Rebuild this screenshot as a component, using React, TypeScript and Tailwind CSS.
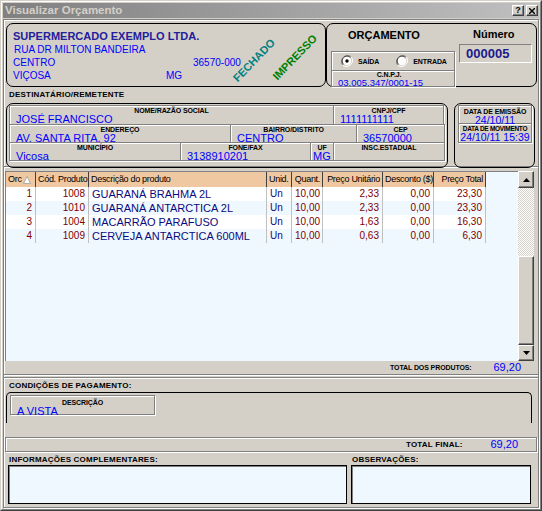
import type { ReactNode } from "react";

const etched = "border border-[#808080] shadow-[inset_1px_1px_0_#fff,1px_1px_0_#fff]";
const raised =
  "border border-t-white border-l-white border-r-[#404040] border-b-[#404040] shadow-[inset_-1px_-1px_0_#808080]";
const sunken = "border border-t-[#808080] border-l-[#808080] border-r-white border-b-white";
const tiny = "text-[7px] font-bold leading-[7px] text-black tracking-[-0.1px]";
const section = "text-[8px] font-bold leading-[8px] text-black tracking-[0.2px]";

function Field({
  label,
  value,
  className = "",
  valueClass = "text-[11px] px-[6px]",
}: {
  label: string;
  value?: ReactNode;
  className?: string;
  valueClass?: string;
}) {
  return (
    <div className={`${etched} -ml-[1px] first:ml-0 overflow-hidden ${className}`}>
      <div className={`${tiny} text-center pt-[1px] leading-[6px] whitespace-nowrap`}>{label}</div>
      <div className={`leading-[10px] text-[#0000ff] whitespace-nowrap ${valueClass}`}>{value}</div>
    </div>
  );
}

function Radio({ checked }: { checked?: boolean }) {
  return (
    <svg width="12" height="12" viewBox="0 0 12 12">
      <path d="M10.2 1.8A6 6 0 0 0 1.8 10.2" fill="none" stroke="#808080" />
      <path d="M9.4 2.6A4.8 4.8 0 0 0 2.6 9.4" fill="none" stroke="#404040" />
      <path d="M1.8 10.2A6 6 0 0 0 10.2 1.8" fill="none" stroke="#ffffff" />
      <circle cx="6" cy="6" r="4.2" fill="#fff" />
      {checked && <circle cx="6" cy="6" r="1.7" fill="#000" />}
    </svg>
  );
}

const cols = [
  { key: "ord", title: "Orc", w: "w-[30px]", align: "text-right" },
  { key: "cod", title: "Cód. Produto", w: "w-[53px]", align: "text-right" },
  { key: "desc", title: "Descrição do produto", w: "w-[178px]", align: "text-left" },
  { key: "un", title: "Unid.", w: "w-[25px]", align: "text-left" },
  { key: "qt", title: "Quant.", w: "w-[31px]", align: "text-right" },
  { key: "pu", title: "Preço Unitário", w: "w-[60px]", align: "text-right" },
  { key: "dc", title: "Desconto ($)", w: "w-[51px]", align: "text-right" },
  { key: "pt", title: "Preço Total", w: "w-[52px]", align: "text-right" },
];

const rows = [
  ["1", "1008", "GUARANÁ BRAHMA 2L", "Un", "10,00", "2,33", "0,00", "23,30"],
  ["2", "1010", "GUARANÁ ANTARCTICA 2L", "Un", "10,00", "2,33", "0,00", "23,30"],
  ["3", "1004", "MACARRÃO PARAFUSO", "Un", "10,00", "1,63", "0,00", "16,30"],
  ["4", "1009", "CERVEJA ANTARCTICA 600ML", "Un", "10,00", "0,63", "0,00", "6,30"],
];

function Arrow({ down }: { down?: boolean }) {
  return (
    <svg width="7" height="4" viewBox="0 0 7 4">
      <path d={down ? "M0 0H7L3.5 4Z" : "M0 4H7L3.5 0Z"} fill="#000" />
    </svg>
  );
}

export default function App() {
  return (
    <div className="w-[542px] h-[511px] bg-[#d4d0c8] font-['Liberation_Sans',Arial,sans-serif] border border-t-[#d4d0c8] border-l-[#d4d0c8] border-r-[#404040] border-b-[#404040] overflow-hidden">
      <div className="h-full border border-t-white border-l-white border-r-[#808080] border-b-[#808080] p-[1px] flex flex-col">
        {/* title bar */}
        <div className="h-[15px] shrink-0 flex items-center bg-gradient-to-r from-[#808080] to-[#c0c0c0] pl-[2px] pr-[1px]">
          <span className="text-[11.5px] font-bold text-[#d4d0c8] leading-none">Visualizar Orçamento</span>
          <div className="ml-auto flex gap-[2px]">
            <div className={`${raised} w-[12px] h-[11px] bg-[#d4d0c8] flex items-center justify-center text-[9px] font-bold leading-none`}>?</div>
            <div className={`${raised} w-[12px] h-[11px] bg-[#d4d0c8] flex items-center justify-center`}>
              <svg width="6" height="6" viewBox="0 0 6 6">
                <path d="M0 0L6 6M6 0L0 6" stroke="#000" strokeWidth="1.4" />
              </svg>
            </div>
          </div>
        </div>

        {/* client */}
        <div className={`${etched} mt-[1px] flex-1 flex flex-col`}>
          {/* section A */}
          <div className="h-[147px] shrink-0 pl-[2px] pt-[3px] border-b border-[#808080] shadow-[0_1px_0_#fff]">
            <div className="flex h-[64px]">
              <div className="relative w-[320px] rounded-[7px] border border-black px-[6px] pt-[6px]">
                <div className="text-[11px] font-bold text-[#22209c] leading-[13px]">SUPERMERCADO EXEMPLO LTDA.</div>
                <div className="text-[10px] text-[#0000ff] leading-[13px] pl-[1px]">RUA DR MILTON BANDEIRA</div>
                <div className="text-[10px] text-[#0000ff] leading-[13px] flex">
                  <span className="w-[180px]">CENTRO</span>
                  <span>36570-000</span>
                </div>
                <div className="text-[10px] text-[#0000ff] leading-[13px] flex">
                  <span className="w-[153px]">VIÇOSA</span>
                  <span>MG</span>
                </div>
                <span className="absolute left-[220px] top-[31px] -rotate-[46deg] text-[11px] font-bold text-[#008080] leading-none">
                  FECHADO
                </span>
                <span className="absolute left-[259px] top-[28px] -rotate-[46deg] text-[11px] font-bold text-[#008000] leading-none">
                  IMPRESSO
                </span>
              </div>
              <div className="w-[211px] rounded-[7px] border border-black flex pl-[4px] pt-[5px]">
                <div className="w-[124px] flex flex-col">
                  <div className="text-[11px] font-bold leading-[11px] pl-[17px] pt-[1px]">ORÇAMENTO</div>
                  <div className="flex flex-col mt-[10px]">
                    <div className={`${etched} h-[20px] flex items-center pl-[9px]`}>
                      <Radio checked />
                      <span className={`${tiny} ml-[5px]`}>SAÍDA</span>
                      <span className="ml-[17px]"><Radio /></span>
                      <span className={`${tiny} ml-[5px]`}>ENTRADA</span>
                    </div>
                    <div className={`${etched} h-[17px] -mt-[1px] flex flex-col`}>
                      <div className={`${tiny} text-center leading-[6px] -ml-[8px]`}>C.N.P.J.</div>
                      <div className="text-[9.5px] text-[#0000ff] leading-[9px] pl-[6px]">03.005.347/0001-15</div>
                    </div>
                  </div>
                </div>
                <div className="ml-[4px] flex flex-col">
                  <div className="text-[11px] font-bold leading-[11px] pl-[14px]">Número</div>
                  <div className={`${sunken} mt-[4px] w-[73px] h-[19px] flex items-center pl-[6px] text-[13px] font-bold text-[#1a1a8c] leading-none`}>
                    000005
                  </div>
                </div>
              </div>
            </div>

            <div className={`${section} mt-[4px] ml-[3px]`}>DESTINATÁRIO/REMETENTE</div>

            <div className="flex mt-[4px] h-[65px]">
              <div className="w-[442px] rounded-[7px] border border-black pl-[2px] pt-[1px]">
                <div className="flex h-[20px]">
                  <Field label="NOME/RAZÃO SOCIAL" value="JOSÉ FRANCISCO" className="w-[325px]" />
                  <Field label="CNPJ/CPF" value="1111111111" className="w-[111px]" />
                </div>
                <div className="flex h-[19px] -mt-[1px]">
                  <Field label="ENDEREÇO" value="AV. SANTA RITA, 92" className="w-[222px]" />
                  <Field label="BAIRRO/DISTRITO" value="CENTRO" className="w-[127px]" />
                  <Field label="CEP" value="36570000" className="w-[89px]" />
                </div>
                <div className="flex h-[19px] -mt-[1px]">
                  <Field label="MUNICÍPIO" value="Viçosa" className="w-[172px]" />
                  <Field label="FONE/FAX" value="3138910201" className="w-[131px]" />
                  <Field label="UF" value="MG" className="w-[24px]" valueClass="text-[11px] px-[2px]" />
                  <Field label="INSC.ESTADUAL" value="" className="w-[112px]" />
                </div>
              </div>
              <div className="ml-[6px] w-[81px] rounded-[7px] border border-black pl-[3px] pt-[1px]">
                <div className={`${etched} w-[74px] h-[19px] flex flex-col items-center`}>
                  <div className={`${tiny} pt-[2px] leading-[6px] whitespace-nowrap`}>DATA DE EMISSÃO</div>
                  <div className="text-[10.5px] text-[#0000ff] leading-[10px]">24/10/11</div>
                </div>
                <div className={`${etched} w-[74px] h-[20px] -mt-[1px] flex flex-col items-center`}>
                  <div className="text-[6.5px] font-bold text-black pt-[2px] leading-[6px] whitespace-nowrap tracking-[-0.3px]">
                    DATA DE MOVIMENTO
                  </div>
                  <div className="text-[10.5px] text-[#0000ff] leading-[10px] whitespace-nowrap">24/10/11 15:39</div>
                </div>
              </div>
            </div>
          </div>

          {/* section B: grid */}
          <div className="h-[207px] shrink-0 mt-[1px] pl-[1px] pt-[3px] border-b border-[#808080] shadow-[0_1px_0_#fff]">
            <div className="flex h-[190px]">
              <div className="w-[513px] bg-[#f0f8ff] border-l border-t border-[#808080]">
                <div className="flex h-[15px]">
                  {cols.map((c) => (
                    <div
                      key={c.key}
                      className={`${c.w} shrink-0 bg-[#efc8a2] border-r border-[#404040] text-[9px] text-black leading-[15px] px-[2px] tracking-[-0.3px] whitespace-nowrap overflow-hidden ${c.align}`}
                    >
                      {c.key === "ord" ? (
                        <span className="flex items-center">
                          Orc
                          <svg width="8" height="8" viewBox="0 0 8 8" className="ml-[1px]">
                            <path d="M4 0.5L7.5 7.5H0.5Z" fill="#fff" stroke="#a0a0a0" strokeWidth="0.8" />
                          </svg>
                        </span>
                      ) : (
                        c.title
                      )}
                    </div>
                  ))}
                </div>
                {rows.map((r, i) => (
                  <div key={i} className="flex h-[14px]">
                    {cols.map((c, j) => (
                      <div
                        key={c.key}
                        className={`${c.w} shrink-0 border-r border-[#c0c0c0] ${i % 2 === 0 ? "bg-white" : "bg-[#f0f8ff]"} ${j === 2 ? "text-[11px]" : "text-[10px]"} leading-[14px] px-[3px] whitespace-nowrap overflow-hidden ${c.align} ${j === 2 || j === 3 ? "text-[#0a0a80]" : "text-[#800000]"}`}
                      >
                        {r[j]}
                      </div>
                    ))}
                  </div>
                ))}
              </div>
              {/* scrollbar */}
              <div className="w-[16px] flex flex-col">
                <div className={`${raised} h-[17px] bg-[#d4d0c8] flex items-center justify-center`}>
                  <Arrow />
                </div>
                <div className="h-[68px] bg-[repeating-conic-gradient(#ffffff_0%_25%,#d4d0c8_0%_50%)] bg-[length:2px_2px]" />
                <div className={`${raised} h-[89px] bg-[#d4d0c8]`} />
                <div className={`${raised} h-[16px] bg-[#d4d0c8] flex items-center justify-center`}>
                  <Arrow down />
                </div>
              </div>
            </div>
            <div className="flex items-center h-[11px] mt-[1px]">
              <span className={`${tiny} ml-[385px]`}>TOTAL DOS PRODUTOS:</span>
              <span className="ml-auto mr-[17px] text-[11px] text-[#0000ff] leading-none">69,20</span>
            </div>
          </div>

          {/* section C */}
          <div className="h-[60px] shrink-0 mt-[2px] border-t border-[#808080] shadow-[inset_0_1px_0_#fff] pl-[2px] pt-[4px]">
            <div className={`${section} ml-[3px]`}>CONDIÇÕES DE PAGAMENTO:</div>
            <div className="mt-[2px] w-[526px] h-[31px] rounded-t-[5px] border-t border-l border-r border-black pl-[3px] pt-[2px]">
              <div className={`${etched} w-[145px] h-[20px] flex flex-col`}>
                <div className={`${tiny} text-center pt-[3px] leading-[6px]`}>DESCRIÇÃO</div>
                <div className="text-[11px] text-[#0000ff] leading-[10px] px-[6px]">A VISTA</div>
              </div>
            </div>
          </div>

          {/* section D */}
          <div className={`${etched} h-[15px] shrink-0 mx-[1px] flex items-center`}>
            <span className={`${section} ml-[400px]`}>TOTAL FINAL:</span>
            <span className="ml-auto mr-[18px] text-[11px] text-[#0000ff] leading-none">69,20</span>
          </div>

          {/* section E */}
          <div className="flex pl-[4px] pt-[4px] gap-[4px]">
            <div className="flex flex-col">
              <div className={`${section} ml-[1px]`}>INFORMAÇÕES COMPLEMENTARES:</div>
              <div className="mt-[1px] w-[339px] h-[39px] bg-[#f0f8ff] border border-black shadow-[inset_1px_1px_0_#808080]" />
            </div>
            <div className="flex flex-col">
              <div className={`${section} ml-[1px]`}>OBSERVAÇÕES:</div>
              <div className="mt-[1px] w-[180px] h-[39px] bg-[#f0f8ff] border border-black shadow-[inset_1px_1px_0_#808080]" />
            </div>
          </div>
        </div>
      </div>
    </div>
  );
}
